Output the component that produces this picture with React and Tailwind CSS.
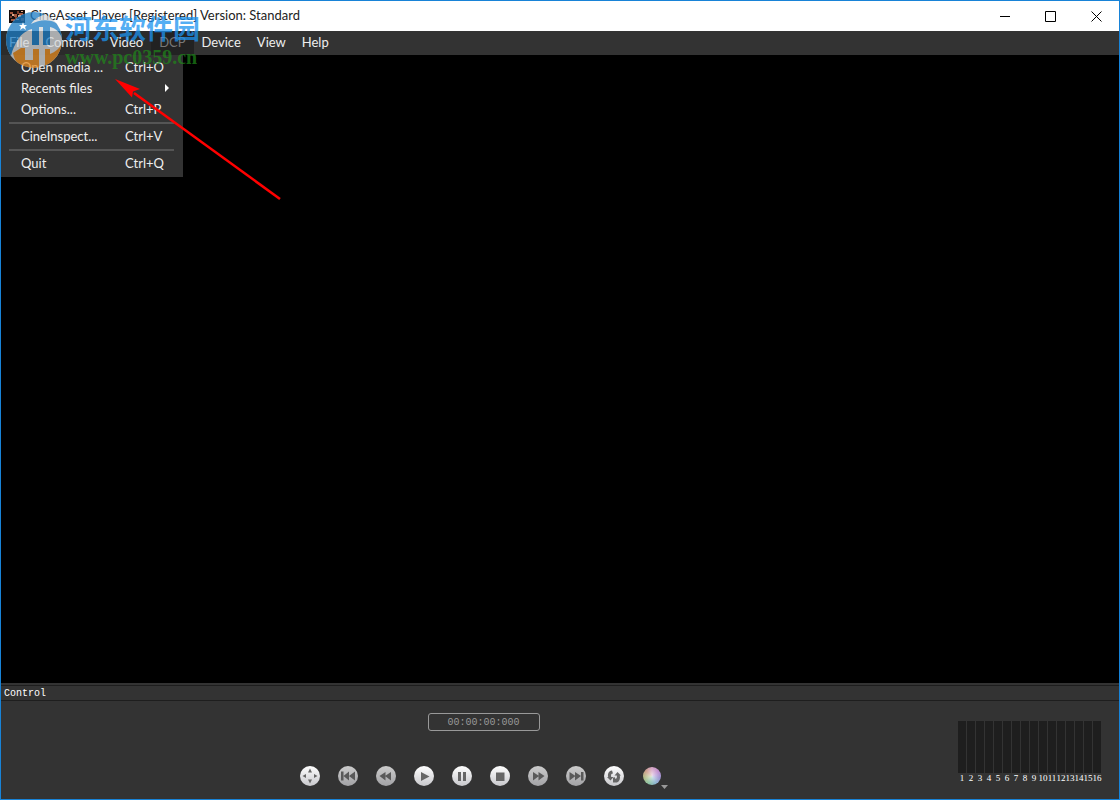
const MENUS = [
  { name: "File", shaded: true },
  { name: "Controls", shaded: true },
  { name: "Video", shaded: true },
  { name: "DCP", disabled: true },
  { name: "Device" },
  { name: "View" },
  { name: "Help" },
];

const FILE_MENU = [
  { label: "Open media ...", shortcut: "Ctrl+O" },
  { label: "Recents files", submenu: true },
  { label: "Options...", shortcut: "Ctrl+P" },
  { separator: true },
  { label: "CineInspect...", shortcut: "Ctrl+V" },
  { separator: true },
  { label: "Quit", shortcut: "Ctrl+Q" },
];

const CHANNELS = Array.from({ length: 16 }, (_, i) => i + 1);

const TRANSPORT = [
  {
    name: "Full screen",
    shape: <path d="M10 2.500l2 4H8zM10 17.500l2-4H8zM2.500 10l3.500-2v4zM17.500 10L14 8v4z" />,
  },
  {
    name: "Previous",
    disabled: true,
    shape: <path d="M3 5.500h2.500v9H3zM11 5.500v9L5.500 10zM17 5.500v9L11 10z" />,
  },
  {
    name: "Rewind",
    disabled: true,
    shape: <path d="M9.500 6v8.500L3.500 10zM15 6v8.500L9 10z" />,
  },
  { name: "Play", shape: <path d="M7 6l8.500 4.500L7 15z" /> },
  { name: "Pause", shape: <path d="M6 6h3v9H6zM11 6h3v9h-3z" /> },
  { name: "Stop", shape: <path d="M6 6.500h8.500V15H6z" /> },
  {
    name: "Fast forward",
    disabled: true,
    shape: <path d="M10.500 6v8.500l6-4.500zM5 6v8.500l6-4.500z" />,
  },
  {
    name: "Next",
    disabled: true,
    shape: <path d="M3.500 6v8.500L9.500 10zM9 6v8.500l6-4.500zM15 6h2.500v8.500H15z" />,
  },
  {
    name: "Loop",
    shape: (
      <path d="M8 4.500C4.500 5 3.500 8 4.200 11H3l3.500 3.500L9.500 11H7.200C6.800 9 7 7.500 9 7.500L8 4.500zM9 16.500h4c2.500-1 3.500-4 2.800-7H17L13.500 6l-3 3.500h2.300c.4 2 0 3-1.300 3.500L10.500 11 9 12z" />
    ),
  },
];

function AppIcon() {
  return (
    <svg width="16" height="13" viewBox="0 0 16 13" aria-hidden="true">
      <path fill="#160d0c" d="M0 0h16v13H0z" />
      <path fill="#a5563e" d="M1 2h3v2H1zM5 4h3v3H5zM10 3h4v2h-4zM2 9h4v2H2z" />
      <path fill="#e0a98b" d="M3 4h2v2H3zM9 5h3v2H9zM7 9h3v1H7zM12 1h2v1h-2z" />
      <path fill="#7a3b28" d="M8 1h2v3H8zM12 8h3v3h-3zM6 7h2v2H6zM1 6h2v2H1z" />
    </svg>
  );
}

function WindowButton({ label, children }) {
  return (
    <button aria-label={label} className="flex h-full w-[46px] items-center justify-center">
      <svg width="11" height="11" fill="none" stroke="#000" aria-hidden="true">
        {children}
      </svg>
    </button>
  );
}

function TitleBar() {
  return (
    <header className="flex h-[30px] items-center bg-white text-[#222]">
      <div className="flex flex-1 items-center gap-[5px] pl-2">
        <AppIcon />
        <h1 className="pb-[2px]">CineAsset Player [Registered] Version: Standard</h1>
      </div>
      <WindowButton label="Minimize">
        <path d="M1 5.500h10" />
      </WindowButton>
      <WindowButton label="Maximize">
        <path d="M.5.5h10v10H.5z" />
      </WindowButton>
      <WindowButton label="Close">
        <path d="M.5.5l10 10M10.500.5l-10 10" />
      </WindowButton>
    </header>
  );
}

function FileMenu() {
  return (
    <div className="absolute top-full left-0 z-10 flex w-[182px] flex-col bg-[#333] pt-[2px] pb-[3px]">
      {FILE_MENU.map((item, i) =>
        item.separator ? (
          <hr key={i} className="my-[2px] mr-[9px] ml-2 border-t-2 border-[#555]" />
        ) : (
          <button key={i} className="flex h-[21px] items-center pb-[2px] pl-5 text-left">
            <span className="w-[104px]">{item.label}</span>
            {item.submenu ? (
              <svg width="4" height="8" className="ml-10" fill="#fff" aria-hidden="true">
                <path d="M0 0l4 4-4 4z" />
              </svg>
            ) : (
              <span>{item.shortcut}</span>
            )}
          </button>
        ),
      )}
    </div>
  );
}

function MenuBar() {
  return (
    <nav className="relative flex h-6 items-stretch bg-[#333] text-[#eee]">
      {MENUS.map(({ name, shaded, disabled }) => (
        <button
          key={name}
          disabled={disabled}
          className={`px-2 pb-[2px] disabled:bg-[#222] disabled:text-[#777] ${shaded ? "bg-[#2b2b2b]" : ""}`}
        >
          {name}
        </button>
      ))}
      <FileMenu />
    </nav>
  );
}

function Watermark() {
  return (
    <div className="pointer-events-none absolute top-[10px] left-1 z-20 flex gap-[2px]">
      <svg width="58" height="58" viewBox="0 0 58 58" opacity=".75" aria-hidden="true">
        <clipPath id="disc">
          <circle cx="29" cy="29" r="28" />
        </clipPath>
        <g clipPath="url(#disc)">
          <path fill="#d5d8da" d="M0 0h58v58H0z" />
          <path fill="#1c7cc4" d="M0 50V0h50C38 3 30 7 26 13c12-7 26-4 32 5v12c-2-8-7-13-13-14v18h-7V16h-4v18h-7V18c-7 2-12 6-16 14-3 5-5 11-6 18z" />
          <path fill="#e58a20" d="M8 42l8-5h4v12h8V38h6v20H18C12 54 9 48 8 42zM40 58V38h5v5c6-2 10-6 13-12v27z" />
          <path fill="#fff" d="M18 11l1 3h3l-2 2 1 3-3-2-3 2 1-3-2-2h3z" />
        </g>
      </svg>
      <div>
        <p className="font-['Noto_Sans_CJK_SC',sans-serif] text-[27px] leading-[34px] font-bold text-[#1c93f0]/75">
          河东软件园
        </p>
        <p className="font-['Liberation_Serif',serif] text-xl leading-6 font-bold text-[#1f8a1a]/70">
          www.pc0359.cn
        </p>
      </div>
    </div>
  );
}

function Arrow() {
  return (
    <svg width="170" height="124" className="pointer-events-none absolute top-[77px] left-[113px] z-30" aria-hidden="true">
      <path d="M20 15L166 121" stroke="#f00" strokeWidth="2.500" />
      <path d="M1 1l25 10-7 2.500-1 6z" fill="#f00" />
    </svg>
  );
}

function TransportButton({ name, disabled, shape }) {
  return (
    <button aria-label={name} disabled={disabled} className="size-5 disabled:opacity-75">
      <svg viewBox="0 0 20 20" fill="#666" aria-hidden="true">
        <circle cx="10" cy="10" r="10" fill="url(#knob)" />
        {shape}
      </svg>
    </button>
  );
}

function ColorButton() {
  return (
    <button aria-label="Color" className="ml-px flex w-6 items-end">
      <span className="size-[18px] shrink-0 rounded-full bg-[radial-gradient(#ffffffaa,#ffffff00_60%),conic-gradient(#d8a8c8,#c08fcf,#9f97d4,#8fb8d0,#8fc4a4,#b5c08c,#cda08c,#d8a8c8)]" />
      <svg width="7" height="4" className="relative top-1 shrink-0" fill="#999" aria-hidden="true">
        <path d="M0 0h7L3.500 4z" />
      </svg>
    </button>
  );
}

function LevelMeters() {
  return (
    <div className="flex gap-px">
      {CHANNELS.map((channel) => (
        <div key={channel} className="flex w-2 flex-col items-center">
          <div className="h-[52px] w-full bg-[#1e1e1e]" />
          <span className="font-['Liberation_Serif',serif] text-[9px] leading-[10px] text-white">
            {channel}
          </span>
        </div>
      ))}
    </div>
  );
}

function ControlPanel() {
  return (
    <section className="bg-[#333] pt-[2px]">
      <h2 className="border-y border-[#1e1e1e] pt-[2px] pl-[3px] font-['Liberation_Mono',monospace] text-[10px] leading-3 text-white">
        Control
      </h2>
      <div className="flex pt-3 pb-[13px]">
        <div className="flex flex-1 flex-col items-center gap-[35px] pl-2">
          <output className="w-28 rounded-[3px] border border-[#999] pt-[2px] text-center font-['Liberation_Mono',monospace] text-[10px] leading-[14px] text-[#999]">
            00:00:00:000
          </output>
          <div className="flex items-center gap-[18px]">
            {TRANSPORT.map((item) => (
              <TransportButton key={item.name} {...item} />
            ))}
            <ColorButton />
          </div>
        </div>
        <div className="pt-2 pr-[18px]">
          <LevelMeters />
        </div>
      </div>
    </section>
  );
}

export default function App() {
  return (
    <div className="relative flex min-h-screen flex-col border border-[#1883d7] bg-black font-['Lato','Noto_Sans',sans-serif] text-[13px] leading-5">
      <svg width="0" height="0" className="absolute" aria-hidden="true">
        <linearGradient id="knob" x2="0" y2="1">
          <stop stopColor="#fff" />
          <stop offset="1" stopColor="#c8c8cc" />
        </linearGradient>
      </svg>
      <TitleBar />
      <MenuBar />
      <main className="flex-1 bg-black" />
      <ControlPanel />
      <Watermark />
      <Arrow />
    </div>
  );
}
